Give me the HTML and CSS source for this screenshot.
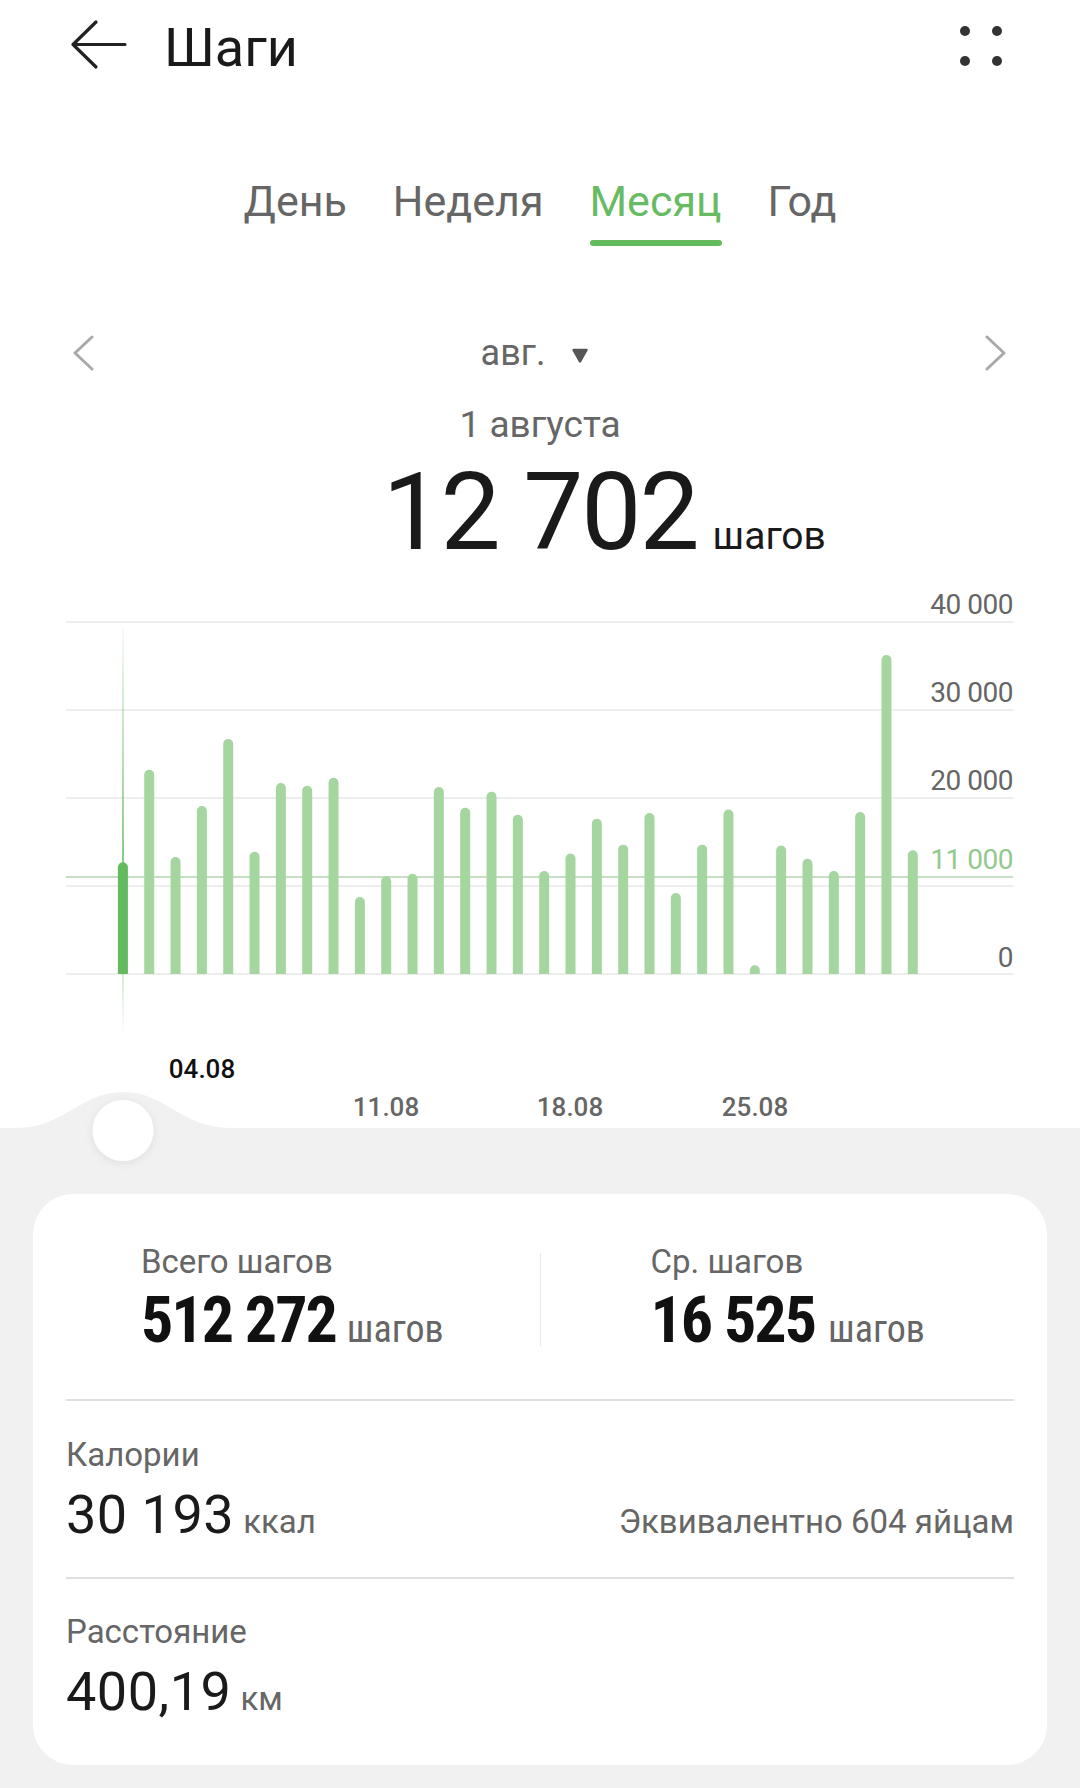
FILE: index.html
```html
<!DOCTYPE html>
<html lang="ru">
<head>
    <meta charset="UTF-8">
    <meta name="viewport" content="width=device-width, initial-scale=1.0">
    <title>Шаги</title>
    <link rel="stylesheet" href="styles.css">
</head>
<body>
    <div class="top">
        <header class="header">
            <svg class="back" width="64" height="56" viewBox="66 18 64 56">
                <path d="M96 22 L73 44.5 L96 67 M73 44.5 H125" fill="none" stroke="#222" stroke-width="3.2" stroke-linecap="round" stroke-linejoin="round"/>
            </svg>
            <h1 class="title">Шаги</h1>
            <svg class="more" width="48" height="48" viewBox="957 20 48 48">
                <circle cx="965" cy="29" r="5"/>
                <circle cx="997" cy="29" r="5"/>
                <circle cx="965" cy="59" r="5"/>
                <circle cx="997" cy="59" r="5"/>
            </svg>
        </header>

        <nav class="tabs">
            <div class="tab">День</div>
            <div class="tab">Неделя</div>
            <div class="tab active">Месяц</div>
            <div class="tab">Год</div>
        </nav>

        <div class="month-nav">
            <svg width="22" height="36" viewBox="72 334 22 36">
                <path d="M92 336 L75 352 L92 368" fill="none" stroke="#a9a9a9" stroke-width="3" stroke-linecap="round" stroke-linejoin="round"/>
            </svg>
            <div class="month">
                <span>авг.</span>
                <svg width="18" height="16" viewBox="0 0 18 16">
                    <path d="M2.5 2 H15.5 L9 13.5 Z" fill="#555" stroke="#555" stroke-width="2.5" stroke-linejoin="round"/>
                </svg>
            </div>
            <svg width="22" height="36" viewBox="985 334 22 36">
                <path d="M987 336 L1004 352 L987 368" fill="none" stroke="#a9a9a9" stroke-width="3" stroke-linecap="round" stroke-linejoin="round"/>
            </svg>
        </div>

        <div class="day">1 августа</div>
        <div class="today">
            <span></span>
            <span class="today-value">12 702</span>
            <span class="today-unit">шагов</span>
        </div>

        <svg class="chart" width="1080" height="562" viewBox="0 566 1080 562">
            <defs>
                <linearGradient id="fade" x1="0" y1="0" x2="0" y2="1">
                    <stop offset="0" stop-color="#64ba5e" stop-opacity="0.05"/>
                    <stop offset="0.55" stop-color="#64ba5e" stop-opacity="0.75"/>
                    <stop offset="0.8" stop-color="#64ba5e" stop-opacity="0.35"/>
                    <stop offset="1" stop-color="#64ba5e" stop-opacity="0"/>
                </linearGradient>
            </defs>
            <g class="grid">
                <line x1="66" x2="1013" y1="622" y2="622"/>
                <line x1="66" x2="1013" y1="710" y2="710"/>
                <line x1="66" x2="1013" y1="798" y2="798"/>
                <line x1="66" x2="1013" y1="886" y2="886"/>
                <line x1="66" x2="1013" y1="974" y2="974"/>
            </g>
            <line class="goal" x1="66" x2="1013" y1="877" y2="877"/>
            <text class="axis" x="1013" y="614">40 000</text>
            <text class="axis" x="1013" y="702">30 000</text>
            <text class="axis" x="1013" y="790">20 000</text>
            <text class="axis axis-goal" x="1013" y="869">11 000</text>
            <text class="axis" x="1013" y="967">0</text>
            <rect x="122" y="627" width="2" height="410" fill="url(#fade)"/>
            <g id="bars"></g>
            <text class="date date-active" x="202" y="1078">04.08</text>
            <text class="date" x="386" y="1116">11.08</text>
            <text class="date" x="570" y="1116">18.08</text>
            <text class="date" x="755" y="1116">25.08</text>
        </svg>
    </div>

    <div class="stats">
        <svg class="knob" width="216" height="84" viewBox="15 1088 216 84">
            <defs>
                <filter id="shadow" x="-40%" y="-40%" width="180%" height="180%">
                    <feDropShadow dx="0" dy="2" stdDeviation="4" flood-color="#000" flood-opacity="0.08"/>
                </filter>
            </defs>
            <path d="M15 1131 V1128 C65 1128 80 1092 123 1092 C166 1092 181 1128 231 1128 V1131 Z" fill="#f1f1f1"/>
            <circle cx="123" cy="1130.5" r="30.5" fill="#fff" filter="url(#shadow)"/>
        </svg>

        <div class="card">
            <div class="totals">
                <div class="total">
                    <div class="label">Всего шагов</div>
                    <div class="total-value"><span class="big-num">512 272</span><span class="narrow-unit">шагов</span></div>
                </div>
                <div class="sep"></div>
                <div class="total">
                    <div class="label">Ср. шагов</div>
                    <div class="total-value"><span class="big-num">16 525</span><span class="narrow-unit">шагов</span></div>
                </div>
            </div>

            <div class="metric">
                <div class="label">Калории</div>
                <div class="metric-row">
                    <div><span class="metric-value">30 193</span><span class="metric-unit">ккал</span></div>
                    <span class="metric-note">Эквивалентно 604 яйцам</span>
                </div>
            </div>

            <div class="metric">
                <div class="label">Расстояние</div>
                <div class="metric-row">
                    <div><span class="metric-value">400,19</span><span class="metric-unit">км</span></div>
                </div>
            </div>
        </div>
    </div>

    <script>
        // шаги по дням за август, в тысячах
        const steps = [12.7, 23.2, 13.3, 19.1, 26.7, 13.9, 21.7, 21.4, 22.3, 8.75, 11.1, 11.4, 21.25, 18.9, 20.7, 18.1,
            11.7, 13.7, 17.65, 14.7, 18.3, 9.2, 14.7, 18.7, 1.0, 14.6, 13.1, 11.7, 18.4, 36.25, 14.05];
        const bars = document.getElementById('bars');
        const base = 974; // линия нуля

        steps.forEach(function (k, i) {
            const x = 117.9 + i * 26.33;
            const top = base - k * 8.8;
            const bar = document.createElementNS('http://www.w3.org/2000/svg', 'path');
            bar.setAttribute('d', `M${x} ${base}V${top + 5}a5 5 0 0 1 10 0V${base}Z`);
            bar.setAttribute('class', i === 0 ? 'bar bar-active' : 'bar');
            bars.appendChild(bar);
        });
    </script>
</body>
</html>
```

FILE: styles.css
```css
body {
    margin: 0;
    width: 1080px;
    font-family: Roboto, "Noto Sans", "Liberation Sans", sans-serif;
    background-color: #f1f1f1;
    color: #1a1a1a;
}
.top {
    background: #fff;
}
.header {
    display: flex;
    align-items: center;
    height: 92px;
    padding: 0 75px 0 66px;
}
.title {
    margin: 4px 0 0 34px;
    font-size: 54px;
    font-weight: 400;
    line-height: 64px;
}
.more {
    margin-left: auto;
    fill: #333;
}
.tabs {
    display: flex;
    justify-content: center;
    gap: 46px;
    margin-top: 84px;
}
.tab {
    display: flex;
    flex-direction: column;
    font-size: 43px;
    line-height: 50px;
    color: #666;
}
.tab::after {
    content: "";
    height: 6px;
    margin-top: 14px;
    border-radius: 3px;
}
.tab.active {
    color: #66bb63;
}
.tab.active::after {
    background: #64ba5e;
}
.month-nav {
    display: flex;
    justify-content: space-between;
    align-items: center;
    height: 44px;
    margin-top: 85px;
    padding: 0 73px 0 72px;
}
.month {
    display: flex;
    align-items: center;
    gap: 26px;
    margin-right: 9px;
    font-size: 36px;
    line-height: 44px;
    color: #666;
}
.month svg {
    margin-top: 6px;
}
.day {
    margin-top: 29px;
    text-align: center;
    font-size: 37px;
    line-height: 42px;
    color: #666;
}
.today {
    display: grid;
    grid-template-columns: 1fr auto 1fr;
    align-items: baseline;
    margin-top: 13px;
}
.today-value {
    font-size: 107px;
    line-height: 107px;
    letter-spacing: -2px;
}
.today-unit {
    margin-left: 15px;
    font-size: 39px;
}
.chart {
    display: block;
}
.grid line {
    stroke: #ededed;
    stroke-width: 2;
}
.goal {
    stroke: #c6dec4;
    stroke-width: 2;
}
.axis {
    font-size: 28px;
    fill: #666;
    text-anchor: end;
    letter-spacing: -0.5px;
}
.axis-goal {
    fill: #93c990;
}
.bar {
    fill: #a5d6a0;
}
.bar-active {
    fill: #64ba5e;
}
.date {
    font-size: 26px;
    font-weight: 500;
    fill: #666;
    text-anchor: middle;
}
.date-active {
    fill: #111;
}
.stats {
    position: relative;
    padding: 66px 33px 23px;
}
.knob {
    position: absolute;
    top: -40px;
    left: 15px;
}
.card {
    background: #fff;
    border-radius: 40px;
    padding: 0 33px;
}
.totals {
    display: grid;
    grid-template-columns: 1fr 1px 1fr;
    padding: 48px 0 43px;
    border-bottom: 2px solid #e0e0e0;
}
.totals .sep {
    align-self: center;
    height: 93px;
    background: #e8e8e8;
}
.total:first-child {
    padding-left: 75px;
}
.total:last-child {
    padding-left: 110px;
}
.label {
    font-size: 33px;
    line-height: 40px;
    color: #666;
}
.total-value {
    margin-top: 4px;
    font-family: "Liberation Sans Narrow", "Roboto Condensed", Roboto, sans-serif;
    font-size: 64px;
    line-height: 70px;
}
.big-num {
    font-weight: 700;
    letter-spacing: -2px;
    color: #111;
}
.narrow-unit {
    margin-left: 11px;
    font-size: 38px;
    line-height: 1;
    color: #666;
}
.total:last-child .narrow-unit {
    margin-left: 13px;
}
.metric {
    padding: 34px 0 32px;
}
.metric + .metric {
    border-top: 2px solid #e0e0e0;
    padding: 33px 0 43px;
}
.metric-row {
    display: flex;
    justify-content: space-between;
    align-items: baseline;
    margin-top: 10px;
    font-size: 54px;
    line-height: 60px;
}
.metric-value {
    letter-spacing: 0.5px;
}
.metric-unit {
    margin-left: 9px;
    font-size: 33px;
    line-height: 1;
    color: #666;
}
.metric-note {
    font-size: 33px;
    line-height: 1;
    color: #666;
}
```
